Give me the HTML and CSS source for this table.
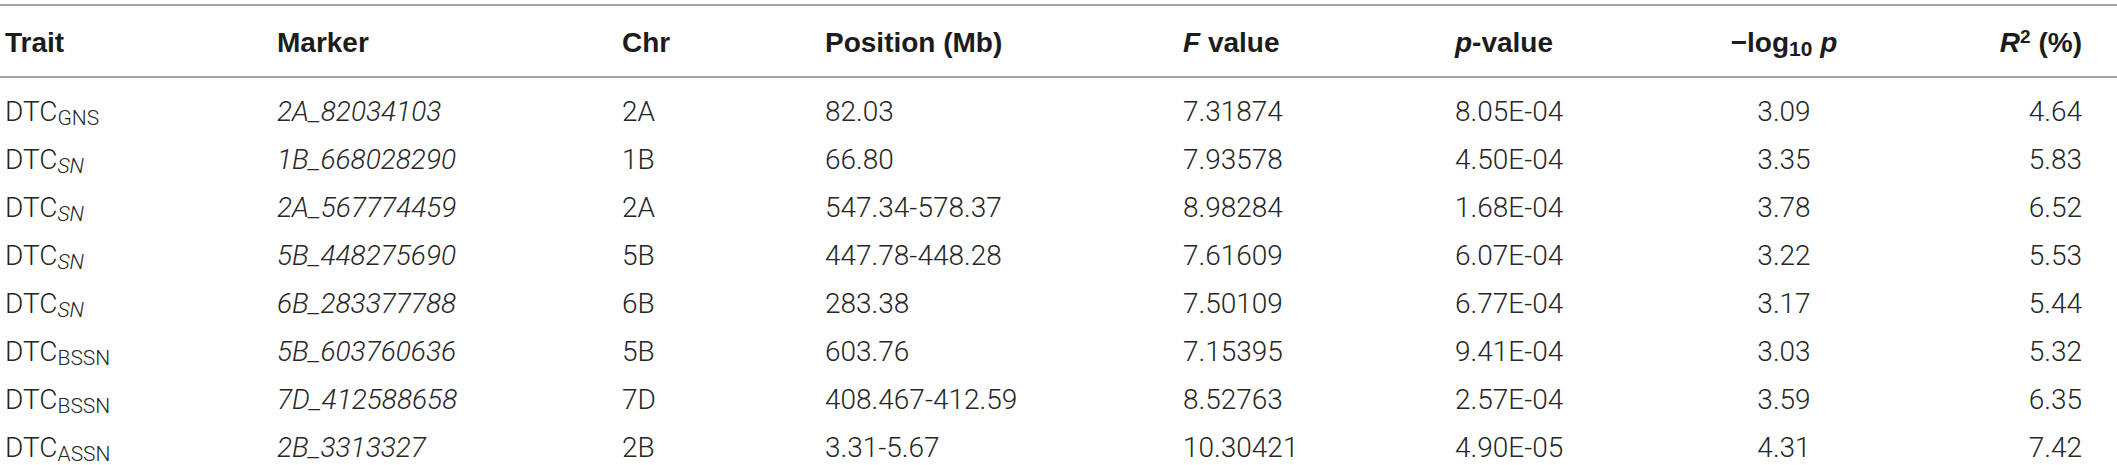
FILE: index.html
```html
<!DOCTYPE html>
<html lang="en">
<head>
<meta charset="utf-8">
<title>Marker-trait associations</title>
<link rel="stylesheet" href="styles.css">
</head>
<body>
<table class="qtl">
  <colgroup>
    <col class="c-trait">
    <col class="c-marker">
    <col class="c-chr">
    <col class="c-pos">
    <col class="c-f">
    <col class="c-p">
    <col class="c-log">
    <col class="c-r2">
  </colgroup>
  <thead>
    <tr>
      <th>Trait</th>
      <th>Marker</th>
      <th>Chr</th>
      <th>Position (Mb)</th>
      <th><i>F</i> value</th>
      <th><i>p</i>-value</th>
      <th class="center">−log<sub>10</sub> <i>p</i></th>
      <th class="right"><i>R</i><sup>2</sup> (%)</th>
    </tr>
  </thead>
  <tbody>
    <tr><td>DTC<sub>GNS</sub></td><td class="mk">2A_82034103</td><td>2A</td><td>82.03</td><td>7.31874</td><td>8.05E-04</td><td class="center">3.09</td><td class="right">4.64</td></tr>
    <tr><td>DTC<sub class="it">SN</sub></td><td class="mk">1B_668028290</td><td>1B</td><td>66.80</td><td>7.93578</td><td>4.50E-04</td><td class="center">3.35</td><td class="right">5.83</td></tr>
    <tr><td>DTC<sub class="it">SN</sub></td><td class="mk">2A_567774459</td><td>2A</td><td>547.34-578.37</td><td>8.98284</td><td>1.68E-04</td><td class="center">3.78</td><td class="right">6.52</td></tr>
    <tr><td>DTC<sub class="it">SN</sub></td><td class="mk">5B_448275690</td><td>5B</td><td>447.78-448.28</td><td>7.61609</td><td>6.07E-04</td><td class="center">3.22</td><td class="right">5.53</td></tr>
    <tr><td>DTC<sub class="it">SN</sub></td><td class="mk">6B_283377788</td><td>6B</td><td>283.38</td><td>7.50109</td><td>6.77E-04</td><td class="center">3.17</td><td class="right">5.44</td></tr>
    <tr><td>DTC<sub>BSSN</sub></td><td class="mk">5B_603760636</td><td>5B</td><td>603.76</td><td>7.15395</td><td>9.41E-04</td><td class="center">3.03</td><td class="right">5.32</td></tr>
    <tr><td>DTC<sub>BSSN</sub></td><td class="mk">7D_412588658</td><td>7D</td><td>408.467-412.59</td><td>8.52763</td><td>2.57E-04</td><td class="center">3.59</td><td class="right">6.35</td></tr>
    <tr><td>DTC<sub>ASSN</sub></td><td class="mk">2B_3313327</td><td>2B</td><td>3.31-5.67</td><td>10.30421</td><td>4.90E-05</td><td class="center">4.31</td><td class="right">7.42</td></tr>
  </tbody>
</table>
</body>
</html>
```

FILE: styles.css
```css
html, body {
  margin: 0;
  padding: 0;
  background: #ffffff;
}

body {
  font-family: Roboto, "Liberation Sans", Arial, sans-serif;
  color: #262626;
  overflow: hidden;
}

.qtl {
  width: 2117px;
  margin-top: 4px;
  border-collapse: collapse;
  table-layout: fixed;
  font-size: 28px;
}

.c-trait { width: 272px; }
.c-marker { width: 345px; }
.c-chr { width: 203px; }
.c-pos { width: 358px; }
.c-f { width: 272px; }
.c-p { width: 230px; }
.c-log { width: 208px; }
.c-r2 { width: 229px; }

.qtl thead th {
  font-family: "Liberation Sans", Arial, sans-serif;
  font-weight: 700;
  color: #1c1c1c;
  text-align: left;
  line-height: 47px;
  padding: 13px 0 10px 5px;
  border-top: 2px solid #a3a3a3;
  border-bottom: 2px solid #a3a3a3;
  white-space: nowrap;
}

.qtl td {
  font-weight: 300;
  line-height: 48px;
  padding: 0 0 0 5px;
  white-space: nowrap;
}

.qtl tbody tr:first-child td {
  padding-top: 10px;
}

.qtl .center {
  text-align: center;
  padding-left: 0;
}

.qtl .right {
  text-align: right;
  padding-left: 0;
  padding-right: 35px;
}

.qtl td.mk {
  font-style: italic;
}

.qtl sub {
  font-size: 21px;
  line-height: 0;
  vertical-align: -4px;
}

.qtl sub.it {
  font-style: italic;
}

.qtl sup {
  font-size: 19px;
  line-height: 0;
  vertical-align: 9px;
}
```
